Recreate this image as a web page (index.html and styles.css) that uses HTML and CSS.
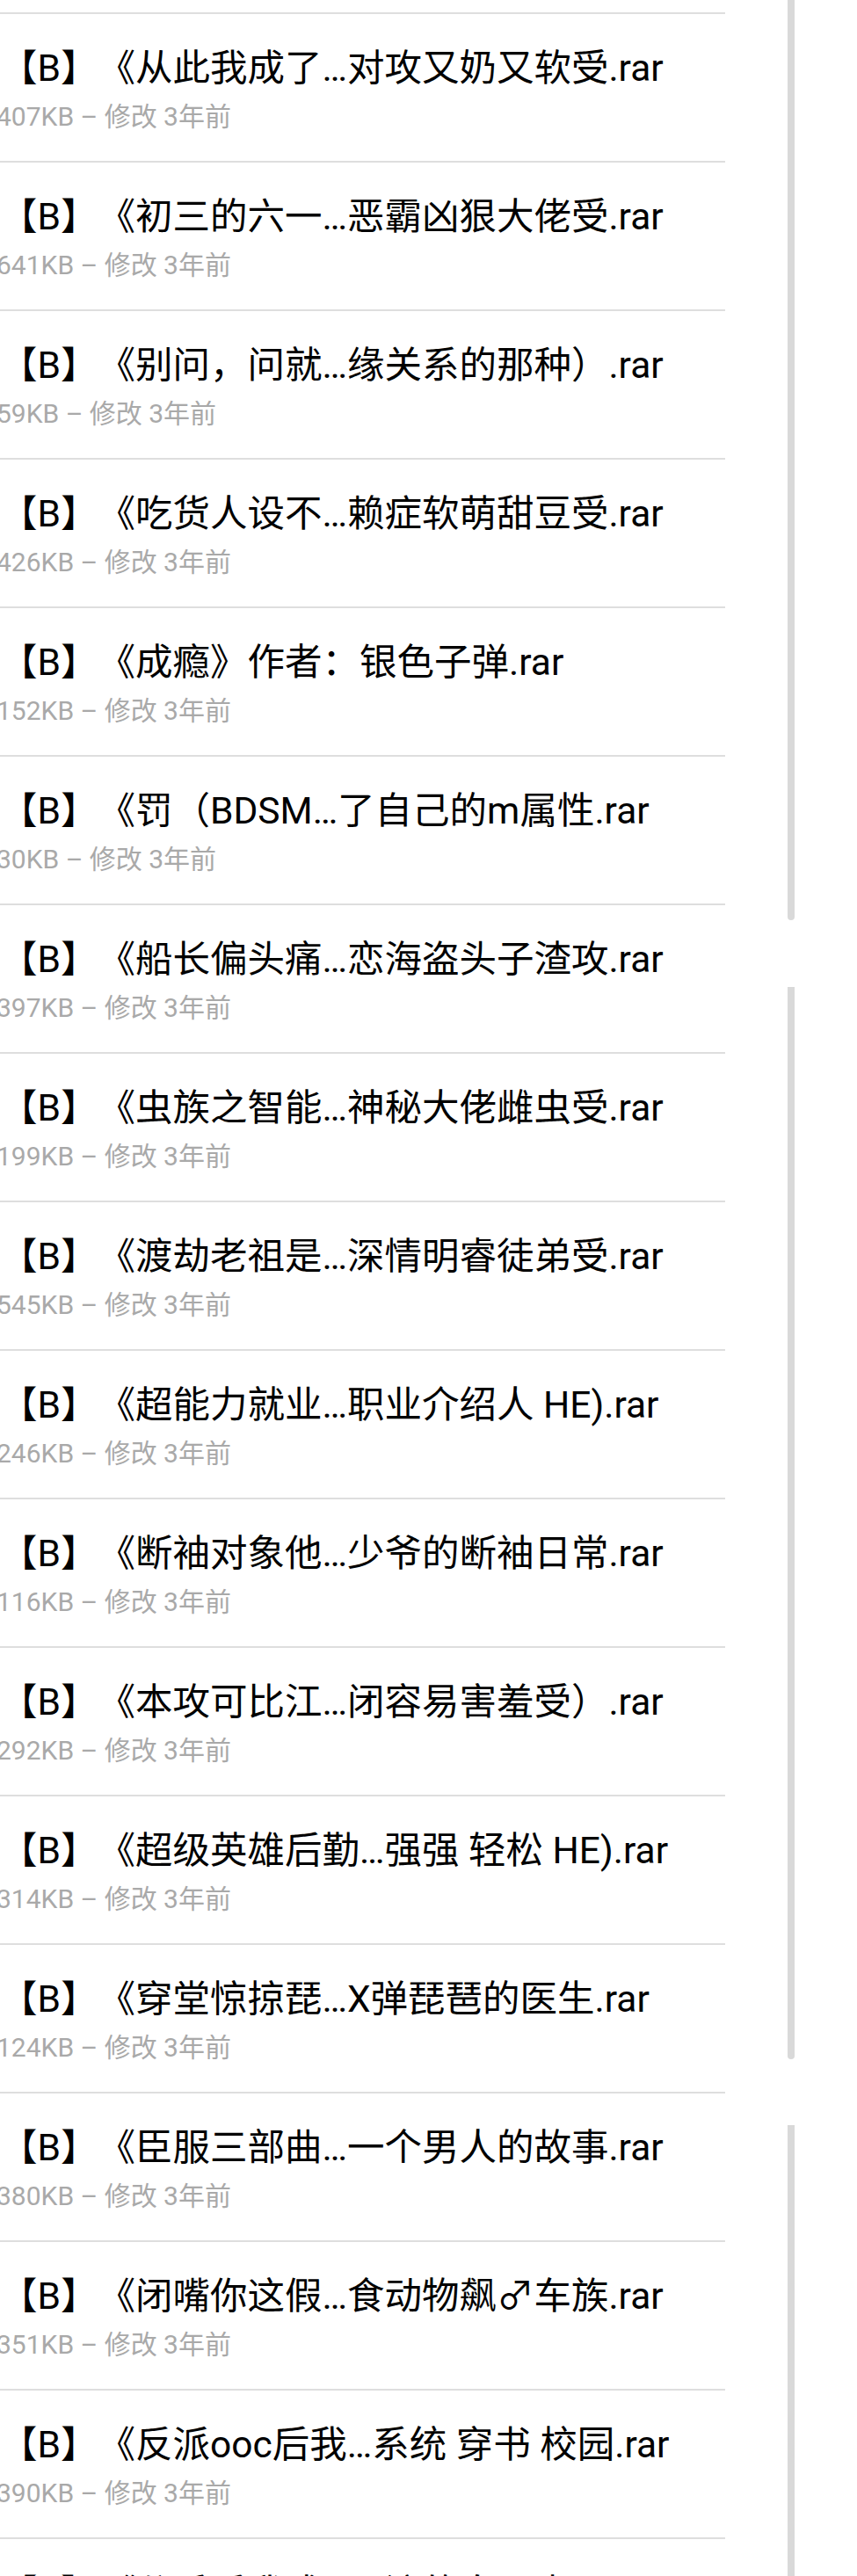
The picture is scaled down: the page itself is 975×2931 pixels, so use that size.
FILE: index.html
```html
<!DOCTYPE html>
<html lang="zh-CN">
<head>
<meta charset="utf-8">
<title>文件列表</title>
<link rel="stylesheet" href="styles.css">
</head>
<body>
<div class="page">
  <div class="list">
    <div class="row"><div class="title">【B】《从此我成了…对攻又奶又软受.rar</div><div class="meta">407KB – 修改 3年前</div></div>
    <div class="row"><div class="title">【B】《初三的六一…恶霸凶狠大佬受.rar</div><div class="meta">641KB – 修改 3年前</div></div>
    <div class="row"><div class="title">【B】《别问，问就…缘关系的那种）.rar</div><div class="meta">59KB – 修改 3年前</div></div>
    <div class="row"><div class="title">【B】《吃货人设不…赖症软萌甜豆受.rar</div><div class="meta">426KB – 修改 3年前</div></div>
    <div class="row"><div class="title">【B】《成瘾》作者：银色子弹.rar</div><div class="meta">152KB – 修改 3年前</div></div>
    <div class="row"><div class="title">【B】《罚（BDSM…了自己的m属性.rar</div><div class="meta">30KB – 修改 3年前</div></div>
    <div class="row"><div class="title">【B】《船长偏头痛…恋海盗头子渣攻.rar</div><div class="meta">397KB – 修改 3年前</div></div>
    <div class="row"><div class="title">【B】《虫族之智能…神秘大佬雌虫受.rar</div><div class="meta">199KB – 修改 3年前</div></div>
    <div class="row"><div class="title">【B】《渡劫老祖是…深情明睿徒弟受.rar</div><div class="meta">545KB – 修改 3年前</div></div>
    <div class="row"><div class="title">【B】《超能力就业…职业介绍人 HE).rar</div><div class="meta">246KB – 修改 3年前</div></div>
    <div class="row"><div class="title">【B】《断袖对象他…少爷的断袖日常.rar</div><div class="meta">116KB – 修改 3年前</div></div>
    <div class="row"><div class="title">【B】《本攻可比江…闭容易害羞受）.rar</div><div class="meta">292KB – 修改 3年前</div></div>
    <div class="row"><div class="title">【B】《超级英雄后勤…强强 轻松 HE).rar</div><div class="meta">314KB – 修改 3年前</div></div>
    <div class="row"><div class="title">【B】《穿堂惊掠琵…X弹琵琶的医生.rar</div><div class="meta">124KB – 修改 3年前</div></div>
    <div class="row"><div class="title">【B】《臣服三部曲…一个男人的故事.rar</div><div class="meta">380KB – 修改 3年前</div></div>
    <div class="row"><div class="title">【B】《闭嘴你这假…食动物飙♂车族.rar</div><div class="meta">351KB – 修改 3年前</div></div>
    <div class="row"><div class="title">【B】《反派ooc后我…系统 穿书 校园.rar</div><div class="meta">390KB – 修改 3年前</div></div>
    <div class="row"><div class="title">【B】《分手后我成…顶流的白月光.rar</div><div class="meta">268KB – 修改 3年前</div></div>
  </div>
  <div class="scrollbar seg1"></div>
  <div class="scrollbar seg2"></div>
  <div class="scrollbar seg3"></div>
</div>
</body>
</html>
```

FILE: styles.css
```css
html, body {
  margin: 0;
  padding: 0;
  background: #ffffff;
}

body {
  font-family: Roboto, "Noto Sans CJK SC", sans-serif;
  text-spacing-trim: space-all;
}

.page {
  position: relative;
  width: 975px;
  height: 2931px;
  overflow: hidden;
  background: #ffffff;
}

.list {
  padding-top: 14px;
  width: 825px;
}

.row {
  height: 169px;
  box-sizing: border-box;
  border-top: 2px solid #dedede;
  padding-top: 37px;
}

.title {
  font-size: 42.5px;
  line-height: 50px;
  color: #000000;
  white-space: nowrap;
  text-spacing-trim: space-all;
}

.meta {
  font-size: 30px;
  line-height: 36px;
  color: #a9a9a9;
  margin-top: 12px;
  margin-left: -4px;
  white-space: nowrap;
}

.scrollbar {
  position: absolute;
  left: 896px;
  width: 8px;
  background: #d9d9d9;
}

.seg1 {
  top: 0;
  height: 1047px;
  border-radius: 0 0 4px 4px;
}

.seg2 {
  top: 1123px;
  height: 1220px;
  border-radius: 0 0 4px 4px;
}

.seg3 {
  top: 2418px;
  height: 513px;
}
```
